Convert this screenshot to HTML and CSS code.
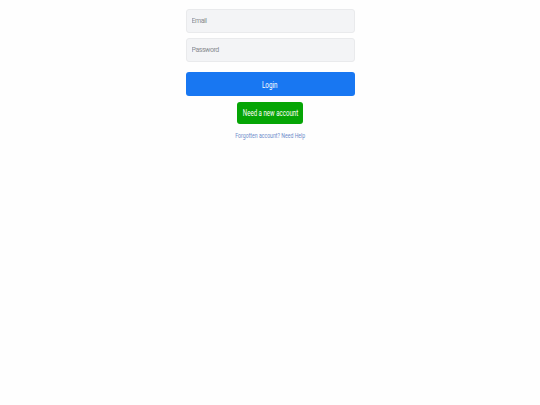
FILE: index.html
```html
<!DOCTYPE html>
<html>
<head>
<meta charset="utf-8">
<link rel="stylesheet" href="styles.css">
</head>
<body>
<form class="login">
  <input class="field" type="text" placeholder="Email">
  <input class="field" type="password" placeholder="Password">
  <button class="btn-login" type="button"><span class="narrow">Login</span></button>
  <button class="btn-new" type="button"><span class="narrow">Need a new account</span></button>
  <a class="help" href="#"><span class="narrow">Forgotten account? Need Help</span></a>
</form>
</body>
</html>
```
FILE: styles.css
```css
html, body {
  margin: 0;
  padding: 0;
  background: #fefefe;
}
body {
  font-family: Roboto, "Liberation Sans", sans-serif;
}
.login {
  width: 169px;
  margin: 9px auto 0;
  display: flex;
  flex-direction: column;
  align-items: center;
}
.narrow {
  display: inline-block;
  white-space: nowrap;
  transform: scaleX(0.74);
}
.field {
  box-sizing: border-box;
  width: 100%;
  height: 24px;
  margin: 0 0 5px;
  padding: 0 5px;
  border: 1px solid #e9eaec;
  border-radius: 3px;
  background: #f3f4f6;
  font-family: inherit;
  font-size: 7px;
  letter-spacing: -0.45px;
  color: #333;
  outline: none;
}
.field::placeholder {
  color: #8a8d91;
}
.btn-login,
.btn-new {
  box-sizing: border-box;
  display: flex;
  align-items: center;
  justify-content: center;
  padding: 0;
  border: none;
  border-radius: 3px;
  color: #fff;
  font-family: inherit;
  white-space: nowrap;
}
.btn-login {
  width: 100%;
  height: 24px;
  margin-top: 5px;
  background: #1877f2;
  font-size: 9.5px;
}
.btn-login .narrow {
  transform: scaleX(0.66);
}
.btn-new {
  height: 22px;
  width: 66px;
  margin-top: 6px;
  background: #05a505;
  font-size: 8.5px;
}
.btn-new .narrow {
  transform: scaleX(0.72);
}
.help {
  margin-top: 7px;
  font-size: 7px;
  line-height: 10px;
  color: #6d8cca;
  text-decoration: none;
  white-space: nowrap;
}
```
